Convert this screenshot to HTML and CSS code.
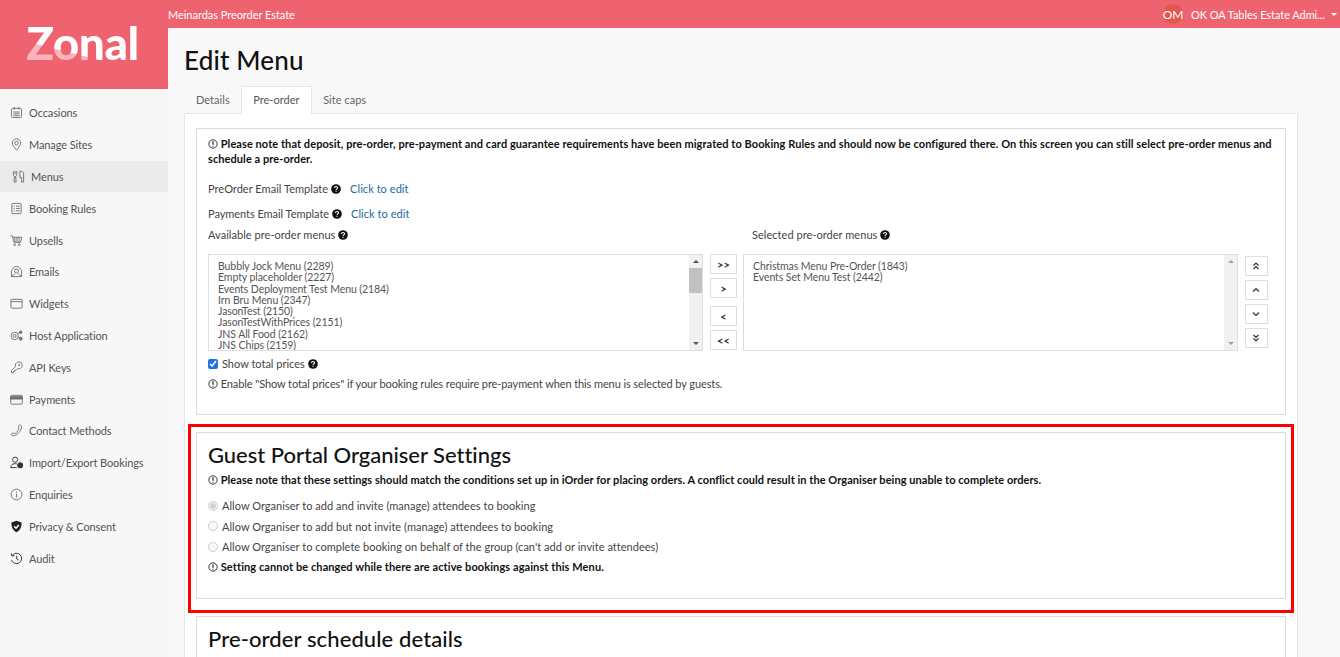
FILE: index.html
```
<!DOCTYPE html>
<html lang="en">
<head>
<meta charset="utf-8">
<title>Edit Menu</title>
<link rel="stylesheet" href="styles.css">
</head>
<body>
<svg class="defs" width="0" height="0" aria-hidden="true">
  <symbol id="i-note" viewBox="0 0 12 12"><circle cx="6" cy="6" r="5" fill="none" stroke="currentColor" stroke-width="1"/><path d="M6 2.800v4M6 8v1.200" fill="none" stroke="currentColor" stroke-width="1.300"/></symbol>
  <symbol id="i-help" viewBox="0 0 12 12"><circle cx="6" cy="6" r="5.800" fill="#111"/><path d="M4.200 4.700c0-2.300 3.700-2.300 3.700-.1 0 1.300-1.800 1.300-1.800 2.600" fill="none" stroke="#fff" stroke-width="1.300"/><path d="M6.100 8v1.400" stroke="#fff" stroke-width="1.400"/></symbol>
</svg>
<div class="app">
  <aside class="side">
    <div class="logo"><span class="logo-text">Zonal</span></div>
    <nav class="nav">
      <a class="nav-item"><svg class="ni" viewBox="0 0 14 14"><rect x="1.500" y="2.500" width="11" height="10" rx="1.500"/><path d="M4.500 1v3M9.500 1v3M3.500 6.500h7M3.500 8.500h7M3.500 10.500h7"/></svg>Occasions</a>
      <a class="nav-item"><svg class="ni" viewBox="0 0 14 14"><path d="M7 13.200C5 10.500 2.500 8 2.500 5.400a4.500 4.500 0 0 1 9 0C11.500 8 9 10.500 7 13.200z"/><circle cx="7" cy="5.400" r="1.900"/></svg>Manage Sites</a>
      <a class="nav-item active"><svg class="ni" viewBox="0 0 14 14"><path d="M1.500 1v4c0 1.300.8 2 1.800 2s1.800-.7 1.800-2V1M3.300 1v3.500M2.600 7l-.4 6h2.200l-.4-6M8.500 1.200c2.300 0 4 .8 4 2.800v9h-2.200V8H8.500z"/></svg>Menus</a>
      <a class="nav-item"><svg class="ni" viewBox="0 0 14 14"><rect x="2" y="1.500" width="10" height="11" rx="1"/><path d="M3.800 4.500h1.200M6.500 4.500h4M3.800 7h1.200M6.500 7h4M3.800 9.500h1.200M6.500 9.500h4"/></svg>Booking Rules</a>
      <a class="nav-item"><svg class="ni" viewBox="0 0 14 14"><path d="M.5 2h2l1.800 7h7l1.500-5.500H3M5 3.500l.5 5.500M7.500 3.500V9M10 3.500L9.500 9"/><circle cx="5" cy="11.500" r="1"/><circle cx="10" cy="11.500" r="1"/></svg>Upsells</a>
      <a class="nav-item"><svg class="ni" viewBox="0 0 14 14"><path d="M1.500 6v6.500h11V6"/><path d="M1.500 6C3 4 4 1.500 7 1.500S11 4 12.500 6"/><circle cx="7" cy="6.500" r="2.200"/><path d="M2 12l3-2.500M12 12L9 9.500"/></svg>Emails</a>
      <a class="nav-item"><svg class="ni" viewBox="0 0 14 14"><rect x="1" y="2.500" width="12" height="9.500" rx=".8"/><path d="M1 5h12"/></svg>Widgets</a>
      <a class="nav-item"><svg class="ni" viewBox="0 0 14 14"><circle cx="5" cy="7.500" r="4"/><circle cx="5" cy="7.500" r="1.600"/><circle cx="11.500" cy="3.500" r="1.400" class="fill"/><circle cx="11.500" cy="10.500" r="1.600" class="fill"/><path d="M8.500 5L10 4M9 8.500l1.500 1"/></svg>Host Application</a>
      <a class="nav-item"><svg class="ni" viewBox="0 0 14 14"><path d="M1.500 12.500V10.500L6 6a3.700 3.700 0 1 1 2.200 2.200L6.500 10H5v1.300H3.700v1.200z"/><circle cx="9.800" cy="4.300" r=".7"/></svg>API Keys</a>
      <a class="nav-item"><svg class="ni" viewBox="0 0 14 14"><rect x=".8" y="2.500" width="12.400" height="9.500" rx="1"/><rect x=".8" y="4" width="12.400" height="2.500" class="fill"/></svg>Payments</a>
      <a class="nav-item"><svg class="ni" viewBox="0 0 14 14"><path d="M12.500 2.800c0-1.400-2-2.300-3-1.100-.8.900-.3 2 .2 2.700-.6 2.800-2.800 5.300-5.200 6-.9-.6-2-.7-2.800 0-.9 1 0 2.300 1.300 2.300 4.800 0 9.500-5.500 9.500-9.900z"/></svg>Contact Methods</a>
      <a class="nav-item"><svg class="ni dark" viewBox="0 0 14 14"><circle cx="5.500" cy="4" r="2.800"/><path d="M.8 12.500c0-3 2-4.200 4.700-4.200 1 0 1.500.1 2 .3M.8 12.500h6.500"/><circle cx="11" cy="10" r="2.800" class="fill"/></svg>Import/Export Bookings</a>
      <a class="nav-item"><svg class="ni" viewBox="0 0 14 14"><circle cx="7" cy="7" r="5.800"/><path d="M7 3.800v1.200M7 6v4.200"/></svg>Enquiries</a>
      <a class="nav-item"><svg class="ni solid" viewBox="0 0 14 14"><path d="M7 .8l5.500 2c0 5-1.500 8.500-5.500 10.500C3 11.300 1.500 7.800 1.500 2.800z"/><path class="cut" d="M4.500 6.800l2 2 3-3.300"/></svg>Privacy &amp; Consent</a>
      <a class="nav-item"><svg class="ni dark" viewBox="0 0 14 14"><path d="M2.200 4A5.600 5.600 0 1 1 1.600 8.500M1.500 1.500L2 4.300l2.800-.3M7.200 4v3.400l2.300 1.400"/></svg>Audit</a>
    </nav>
  </aside>
  <div class="main">
    <header class="topbar">
      <span class="estate">Meinardas Preorder Estate</span>
      <div class="user"><span class="avatar">OM</span><span class="uname">OK OA Tables Estate Admi...</span><span class="caret"></span></div>
    </header>
    <div class="content">
      <h1 class="title">Edit Menu</h1>
      <div class="tabs">
        <a class="tab">Details</a>
        <a class="tab current">Pre-order</a>
        <a class="tab">Site caps</a>
      </div>
      <div class="panel">
        <section class="card card-a">
          <p class="note bold first"><svg class="ic-note"><use href="#i-note"/></svg> Please note that deposit, pre-order, pre-payment and card guarantee requirements have been migrated to Booking Rules and should now be configured there. On this screen you can still select pre-order menus and schedule a pre-order.</p>
          <div class="tpl tpl-1"><span>PreOrder Email Template</span><svg class="ic-help"><use href="#i-help"/></svg><a class="link">Click to edit</a></div>
          <div class="tpl tpl-2"><span>Payments Email Template</span><svg class="ic-help"><use href="#i-help"/></svg><a class="link">Click to edit</a></div>
          <div class="pick-labels">
            <div class="pick-label"><span>Available pre-order menus</span><svg class="ic-help"><use href="#i-help"/></svg></div>
            <div class="pick-label"><span>Selected pre-order menus</span><svg class="ic-help"><use href="#i-help"/></svg></div>
          </div>
          <div class="picker">
            <div class="list">
              <div class="list-items">
                <div>Bubbly Jock Menu (2289)</div>
                <div>Empty placeholder (2227)</div>
                <div>Events Deployment Test Menu (2184)</div>
                <div>Irn Bru Menu (2347)</div>
                <div>JasonTest (2150)</div>
                <div>JasonTestWithPrices (2151)</div>
                <div>JNS All Food (2162)</div>
                <div>JNS Chips (2159)</div>
              </div>
              <div class="sbar"><span class="arr up"></span><span class="track"><span class="thumb"></span></span><span class="arr down"></span></div>
            </div>
            <div class="moves">
              <button class="btn">&gt;&gt;</button>
              <button class="btn">&gt;</button>
              <button class="btn gap">&lt;</button>
              <button class="btn">&lt;&lt;</button>
            </div>
            <div class="list">
              <div class="list-items">
                <div>Christmas Menu Pre-Order (1843)</div>
                <div>Events Set Menu Test (2442)</div>
              </div>
              <div class="sbar off"><span class="arr up"></span><span class="track"></span><span class="arr down"></span></div>
            </div>
            <div class="orders">
              <button class="btn small"><svg viewBox="0 0 10 10"><path d="M2.500 4.500L5 2l2.500 2.500M2.500 8L5 5.500 7.500 8"/></svg></button>
              <button class="btn small"><svg viewBox="0 0 10 10"><path d="M2 6.500L5 3.500l3 3"/></svg></button>
              <button class="btn small"><svg viewBox="0 0 10 10"><path d="M2 3.500L5 6.500l3-3"/></svg></button>
              <button class="btn small"><svg viewBox="0 0 10 10"><path d="M2.500 2L5 4.500 7.500 2M2.500 5.500L5 8l2.500-2.500"/></svg></button>
            </div>
          </div>
          <label class="check"><input type="checkbox" checked><span>Show total prices</span><svg class="ic-help"><use href="#i-help"/></svg></label>
          <p class="note hint"><svg class="ic-note"><use href="#i-note"/></svg> Enable "Show total prices" if your booking rules require pre-payment when this menu is selected by guests.</p>
        </section>
        <section class="card card-b">
          <h2 class="head">Guest Portal Organiser Settings</h2>
          <p class="note bold lead"><svg class="ic-note"><use href="#i-note"/></svg> Please note that these settings should match the conditions set up in iOrder for placing orders. A conflict could result in the Organiser being unable to complete orders.</p>
          <div class="radios">
            <label class="radio"><input type="radio" name="org" checked disabled><span>Allow Organiser to add and invite (manage) attendees to booking</span></label>
            <label class="radio"><input type="radio" name="org" disabled><span>Allow Organiser to add but not invite (manage) attendees to booking</span></label>
            <label class="radio"><input type="radio" name="org" disabled><span>Allow Organiser to complete booking on behalf of the group (can't add or invite attendees)</span></label>
          </div>
          <p class="note bold tail"><svg class="ic-note"><use href="#i-note"/></svg> Setting cannot be changed while there are active bookings against this Menu.</p>
        </section>
        <section class="card card-c">
          <h2 class="head">Pre-order schedule details</h2>
        </section>
      </div>
    </div>
  </div>
</div>
<div class="highlight"></div>
</body>
</html>
```
FILE: styles.css
```
* { box-sizing: border-box; }
html, body { margin: 0; height: 100%; overflow: hidden; }
body { font-family: "Lato", "Noto Sans", sans-serif; font-size: 11px; color: #444; background: #f8f8f8; }
.defs { position: absolute; }
.app { display: flex; height: 657px; overflow: hidden; }

.side { width: 168px; flex: none; background: #f7f7f7; }
.logo { height: 89px; background: #ef6370; display: flex; justify-content: center; padding: 18px 3px 0 0; }
.logo-text {
  font-family: "Lato", sans-serif; font-weight: 900; font-size: 46px; line-height: 50px; height: 50px; letter-spacing: -.5px;
  background: linear-gradient(194deg, #fff 66%, #fbb4bb 66.500%);
  -webkit-background-clip: text; background-clip: text; color: transparent;
}
.nav { padding-top: 8px; }
.nav-item { display: flex; align-items: center; height: 31.800px; padding-left: 10px; gap: 6px; color: #555; font-size: 11px; letter-spacing: -.1px; white-space: nowrap; }
.nav-item.active { background: #ebebeb; padding-left: 12px; }
.ni { width: 13px; height: 13px; flex: none; fill: none; stroke: #707070; stroke-width: 1; }
.ni .fill { fill: #707070; }
.ni.solid { fill: #222; stroke: none; }
.ni.solid .cut { fill: none; stroke: #fff; stroke-width: 1.600; }
.ni.dark { stroke: #333; }
.ni.dark .fill { fill: #333; }

.main { flex: 1; min-width: 0; }
.topbar { height: 28px; background: #ef6370; color: #fff; display: flex; align-items: center; justify-content: space-between; font-size: 11px; letter-spacing: -.04px; }
.user { display: flex; align-items: center; padding-right: 3px; }
.avatar { width: 20px; height: 20px; border-radius: 50%; background: #e2574c; display: flex; align-items: center; justify-content: center; font-size: 12px; letter-spacing: 0; }
.uname { margin-left: 8px; width: 139px; white-space: nowrap; letter-spacing: -.06px; }
.caret { width: 6px; height: 3px; border: 3px solid transparent; border-top-color: #fff; border-bottom: 0; margin-left: 1px; }

.content { padding: 0 42px 0 16px; }
.title { margin: 0; font-size: 26px; font-weight: 500; color: #111; line-height: 32px; padding: 16px 0 10px; letter-spacing: .17px; }
.tabs { display: flex; height: 27px; position: relative; z-index: 1; margin-left: 1px; }
.tab { padding: 0 11px; line-height: 28px; color: #666; font-size: 11px; letter-spacing: .03px; }
.tab.current { background: #fff; border: 1px solid #e6e6e6; border-bottom: 0; height: 28px; color: #555; line-height: 26px; padding: 0 11.500px; }
.panel { background: #fff; border: 1px solid #e6e6e6; padding: 14px 11px 0; height: 560px; }
.card { border: 1px solid #dcdcdc; background: #fff; padding: 0 11px; }
.card-a { height: 287px; padding-top: 7px; }
.card-b { height: 167px; margin-top: 17px; padding-top: 8px; }
.card-c { margin-top: 17px; height: 100px; padding-top: 8px; }
.note { margin: 0; line-height: 15px; font-size: 11px; }
.bold { font-weight: 700; color: #111; letter-spacing: .05px; }
.bold.first { letter-spacing: .07px; }
.ic-note { width: 10px; height: 10px; vertical-align: -1px; color: #111; }
.ic-help { width: 10px; height: 10px; flex: none; margin-left: 3px; }
.tpl { display: flex; align-items: center; height: 15px; letter-spacing: .03px; }
.tpl-1 { margin-top: 15px; }
.tpl-2 { margin-top: 10px; letter-spacing: -.05px; }
.link { color: #1a6aa0; margin-left: 9px; letter-spacing: .05px; }
.pick-labels { display: flex; margin-top: 6px; height: 15px; letter-spacing: .04px; }
.pick-label { display: flex; align-items: center; flex: none; width: 544px; }
.picker { display: flex; margin-top: 12px; height: 97px; }
.list { width: 495px; flex: none; height: 97px; border: 1px solid #dedede; display: flex; background: #fff; }
.list-items { flex: 1; padding: 6px 9px 0; line-height: 11.300px; overflow: hidden; color: #555; font-size: 10.500px; letter-spacing: -.08px; white-space: nowrap; }
.sbar { width: 13px; background: #f1f1f1; display: flex; flex-direction: column; }
.arr { height: 13px; display: flex; align-items: center; justify-content: center; flex: none; }
.arr::before { content: ""; width: 0; height: 0; border: 3px solid transparent; }
.arr.up::before { border-bottom-color: #555; border-top: 0; }
.arr.down::before { border-top-color: #555; border-bottom: 0; }
.off .arr.up::before { border-bottom-color: #a3a3a3; }
.off .arr.down::before { border-top-color: #a3a3a3; }
.track { flex: 1; }
.thumb { display: block; height: 25px; background: #c1c1c1; }
.moves, .orders { display: flex; flex-direction: column; flex: none; }
.moves { width: 40px; padding: 0 6px 0 7px; gap: 4px; }
.orders { padding: 2px 0 0 6.500px; gap: 4px; }
.btn { width: 27px; height: 20px; border: 1px solid #dedede; background: #fff; padding: 0; font: 700 11px "Lato", sans-serif; color: #333; display: flex; align-items: center; justify-content: center; }
.btn.gap { margin-top: 4px; }
.btn.small { width: 23px; }
.btn svg { width: 10px; height: 10px; fill: none; stroke: #333; stroke-width: 1.200; }
.check { display: flex; align-items: center; height: 15px; margin-top: 5px; letter-spacing: 0; }
.check input { width: 10px; height: 10px; margin: 0 4px 0 0; accent-color: #1a73e8; }
.hint { margin-top: 5px; letter-spacing: -.1px; }
.head { margin: 0; font-size: 22px; font-weight: 500; color: #111; line-height: 28px; letter-spacing: -.03px; }
.card-c .head { letter-spacing: .1px; }
.lead { margin-top: 3px; }
.radios { margin-top: 11px; display: flex; flex-direction: column; gap: 5.500px; }
.radio { display: flex; align-items: center; height: 15px; letter-spacing: .03px; }
.radio input { width: 10px; height: 10px; margin: 0 4px 0 0; }
.tail { margin-top: 5px; letter-spacing: .09px; }
.highlight { position: absolute; left: 188px; top: 424px; width: 1106px; height: 189px; border: 3px solid #f00; pointer-events: none; }
```
